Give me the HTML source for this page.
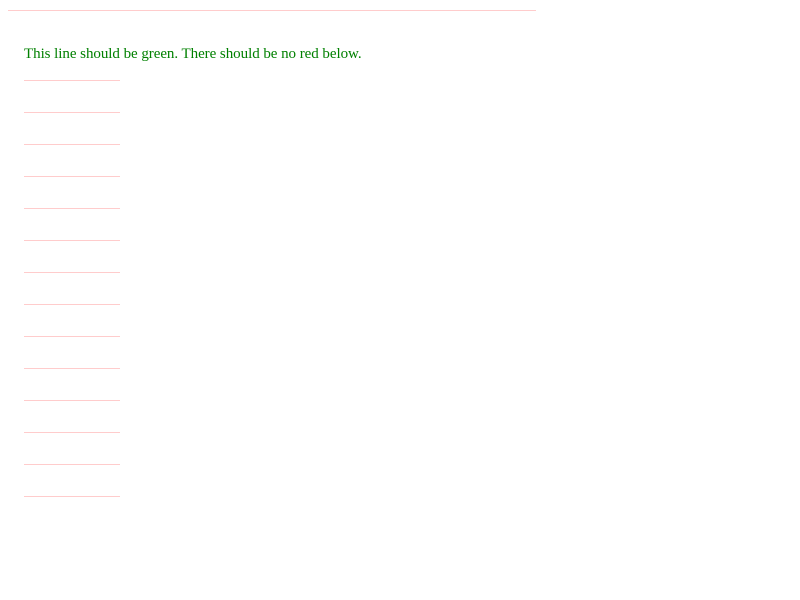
<!DOCTYPE html>
<html><head><style>
body{margin:0;background:#fff;position:relative;width:800px;height:600px;overflow:hidden}
.l{position:absolute;height:1px;background:#ffcccc}
.t{position:absolute;left:24px;top:46px;font:15px "Liberation Serif",serif;color:green;white-space:nowrap;letter-spacing:-0.05px}
</style></head><body>
<div class="l" style="left:8px;top:10px;width:528px"></div>
<div class="t">This line should be green. There should be no red below.</div>
<div class="l" style="left:24px;top:80px;width:96px"></div>
<div class="l" style="left:24px;top:112px;width:96px"></div>
<div class="l" style="left:24px;top:144px;width:96px"></div>
<div class="l" style="left:24px;top:176px;width:96px"></div>
<div class="l" style="left:24px;top:208px;width:96px"></div>
<div class="l" style="left:24px;top:240px;width:96px"></div>
<div class="l" style="left:24px;top:272px;width:96px"></div>
<div class="l" style="left:24px;top:304px;width:96px"></div>
<div class="l" style="left:24px;top:336px;width:96px"></div>
<div class="l" style="left:24px;top:368px;width:96px"></div>
<div class="l" style="left:24px;top:400px;width:96px"></div>
<div class="l" style="left:24px;top:432px;width:96px"></div>
<div class="l" style="left:24px;top:464px;width:96px"></div>
<div class="l" style="left:24px;top:496px;width:96px"></div>
</body></html>
